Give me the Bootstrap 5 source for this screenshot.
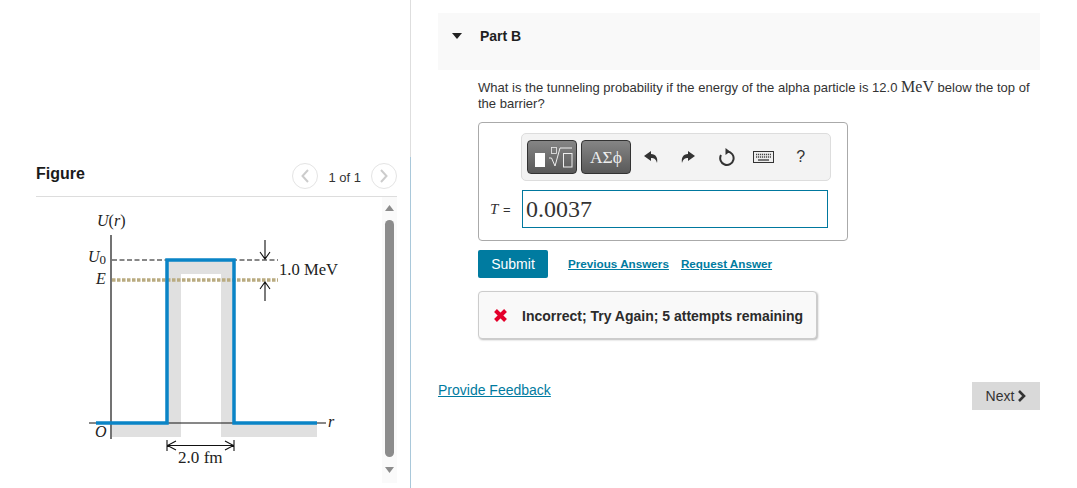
<!DOCTYPE html>
<html lang="en"><head><meta charset="utf-8"><title>Part B</title>
<link rel="stylesheet" href="https://cdn.jsdelivr.net/npm/bootstrap@5.3.0/dist/css/bootstrap.min.css">
<style>
html,body{height:488px;overflow:hidden;background:#fff}
body{font-family:"Liberation Sans",Arial,sans-serif;color:#212121;font-size:12px}
a{color:#007ba0}
.leftpane{width:410px;height:488px;padding:160px 13px 5px 36px;flex:none}
.divider{width:1px;height:488px;flex:none;background:linear-gradient(#dedede 157px,#a9c8da 157px)}
.figtitle{font-size:16px;font-weight:700;color:#1a1a1a;line-height:26px;padding-top:1px}
.fighead{height:37px;border-bottom:1px solid #ddd}
.pager{font-size:13px;color:#333;gap:10px;margin-top:3px}
.pagebtn{width:26px;height:26px;border:1px solid #e4e4e4;border-radius:50%;display:flex;align-items:center;justify-content:center}
.pagecount{padding-top:3px}
.figbody{height:286px}
.figure-canvas{width:346px;height:291px;display:block;flex:none}
.figure-canvas text{font-family:"Liberation Serif",serif;fill:#222;font-size:16px}
.figure-canvas text.txt-mev{font-size:16.600px}
.figure-canvas text.txt-fm{font-size:17.100px}
.scrolltrack{width:15px;background:#fafafa;height:286px}
.rightpane{padding:13px 37px 0 27px;flex:1;min-width:0}
.partbar{height:57px;background:#f9f9f9;padding:13px 0 0 14px;gap:18px;font-size:14px;font-weight:700;color:#1f1f1f;line-height:19px}
.parttitle{padding-top:1px}
.caret{width:0;height:0;border-left:5.500px solid transparent;border-right:5.500px solid transparent;border-top:6px solid #222;margin-top:7px}
.qbody{padding:10px 4px 0 40px}
.qtext{font-size:13.040px;line-height:16px;color:#333;margin:0 0 10px}
.qtext span{font-family:"Liberation Serif",serif;font-size:16px;line-height:14px}
.answerbox{width:370px;height:119px;border:1px solid #aaa;border-radius:4px;padding:10px 0 0 11px}
.mathbar{width:310px;height:48px;margin-left:31px;background:#f3f3f3;border:1px solid #ddd;border-radius:5px;padding:6px 0 0 5px}
.mathkey{width:50px;height:34px;border:1px solid #333;border-radius:4px;background:linear-gradient(#858585,#595959);color:#eee;font-family:"Liberation Serif",serif;font-size:17.500px;margin-right:4px;white-space:nowrap}
.tools{margin-left:-3px;color:#333}
.toolslot{width:37.500px;height:34px;display:flex;align-items:center;justify-content:center;font-size:16px}
.eqrow{margin-top:9px}
.eqlabel{width:32px;font-size:13px;color:#333;white-space:nowrap}
.eqlabel i{font-family:"Liberation Serif",serif;font-size:15px;margin-right:1px}
.eqinput{width:306px;height:38px;border:1px solid #00789e;font-family:"Liberation Serif",serif;font-size:24px;color:#333;padding-left:3px;line-height:36px}
.actionrow{margin-top:9px;gap:20px}
.submitbtn{width:70px;height:28px;background:#007ba0;color:#fff;font-size:14px;border-radius:2px;padding:0;border:0}
.submitbtn:hover{background:#007ba0;color:#fff}
.linkgap{gap:12px;font-size:11.700px;font-weight:700;margin-top:-1px}
.feedbackbox{width:339px;height:48px;margin-top:13px;background:#f9f9f9;border:1px solid #ccc;border-radius:4px;box-shadow:1px 1px 2px #bbb;padding-left:14px;gap:14px;font-size:14px;font-weight:700;color:#2b2b2b}
.feedmsg{padding-top:2px}
.footrow{margin-top:44px;font-size:14px}
.nextbtn{width:68px;height:28px;background:#d9d9d9;color:#333;font-size:14px;padding:0;border:0;border-radius:0;gap:3px;margin-top:-1px}
.nextbtn:hover{background:#d9d9d9;color:#333}
.feedlink{line-height:16px;margin-top:-1px}
</style></head>
<body>
<div class="d-flex">
  <div class="leftpane">
    <div class="fighead d-flex justify-content-between align-items-start">
      <div class="figtitle">Figure</div>
      <div class="pager d-flex align-items-center">
        <span class="pagebtn"><svg width="8" height="14" viewBox="0 0 8 14"><path d="M7 1 1.500 7 7 13" fill="none" stroke="#ccc" stroke-width="2"/></svg></span>
        <span class="pagecount">1 of 1</span>
        <span class="pagebtn"><svg width="8" height="14" viewBox="0 0 8 14"><path d="M1 1 6.500 7 1 13" fill="none" stroke="#ccc" stroke-width="2"/></svg></span>
      </div>
    </div>
    <div class="figbody d-flex">
      <svg class="figure-canvas" viewBox="36 197 346 291" aria-label="Potential energy barrier">
        <g fill="#e0e0e0">
          <rect x="112" y="423" width="69" height="14"/>
          <rect x="166" y="260" width="15" height="177"/>
          <rect x="166" y="260" width="68" height="14"/>
          <rect x="221" y="260" width="13" height="177"/>
          <rect x="221" y="423" width="96" height="14"/>
        </g>
        <path d="M112 260H278" stroke="#111" stroke-width="1" stroke-dasharray="5 2.500" fill="none"/>
        <path d="M112 280H278" stroke="#b9ab80" stroke-width="3.500" stroke-dasharray="3.500 1.500" fill="none"/>
        <path d="M89 423H326" stroke="#111" stroke-width="1"/>
        <path d="M111 235V439" stroke="#444" stroke-width="1.500"/>
        <path d="M96 423H167V260H234V423H317" fill="none" stroke="#0a84c6" stroke-width="3.500"/>
        <g fill="none" stroke="#111" stroke-width="1.100">
          <path d="M265 240V259M260 252 265 259 270 252"/>
          <path d="M265 301V282M260 289 265 282 270 289"/>
          <path d="M167 440V451M234 440V451M167 445.500H234M176 441 167.500 445.500 176 450M225 441 233.500 445.500 225 450"/>
        </g>
        <text x="97" y="226"><tspan font-style="italic">U</tspan>(<tspan font-style="italic">r</tspan>)</text>
        <text x="88" y="262"><tspan font-style="italic">U</tspan><tspan font-size="13" dy="2">0</tspan></text>
        <text x="96" y="284" font-style="italic">E</text>
        <text class="txt-mev" x="279" y="275">1.0 MeV</text>
        <text x="328" y="427" font-style="italic">r</text>
        <text x="95" y="437" font-style="italic">O</text>
        <text class="txt-fm" x="178" y="463">2.0 fm</text>
      </svg>
      <div class="scrolltrack">
        <svg width="15" height="286" viewBox="0 0 15 286">
          <path d="M3 14 7.500 8 12 14Z" fill="#8c8c8c"/>
          <rect x="3" y="23" width="9" height="237" rx="4.500" fill="#8c8c8c"/>
          <path d="M3 270 7.500 276 12 270Z" fill="#8c8c8c"/>
        </svg>
      </div>
    </div>
  </div>
  <div class="divider"></div>
  <div class="rightpane">
    <div class="partbar d-flex align-items-start">
      <span class="caret"></span><span class="parttitle">Part B</span>
    </div>
    <div class="qbody">
      <p class="qtext">What is the tunneling probability if the energy of the alpha particle is 12.0 <span>MeV</span> below the top of the barrier?</p>
      <div class="answerbox">
        <div class="mathbar d-flex">
          <button type="button" class="mathkey p-0 d-flex align-items-center justify-content-center" aria-label="Templates">
            <svg width="44" height="30" viewBox="0 0 44 30"><rect x="5" y="11" width="10" height="14" fill="#fff"/><rect x="21.500" y="5.500" width="5" height="6" fill="none" stroke="#eee" stroke-width=".8"/><path d="M19 16h2.500l3.500 8 5-18H42" fill="none" stroke="#eee" stroke-width="1"/><rect x="33.500" y="11.500" width="8.500" height="13.500" fill="none" stroke="#eee" stroke-width="1"/></svg>
          </button>
          <button type="button" class="mathkey p-0">ΑΣϕ</button>
          <div class="tools d-flex">
            <span class="toolslot"><svg width="16" height="14" viewBox="0 0 16 14"><path d="M8 1 1 6l7 5V8c3 0 5 1 6 5 1-5-1-9-6-9Z" fill="#333"/></svg></span>
            <span class="toolslot"><svg width="16" height="14" viewBox="0 0 16 14"><path d="M8 1l7 5-7 5V8c-3 0-5 1-6 5-1-5 1-9 6-9Z" fill="#333"/></svg></span>
            <span class="toolslot"><svg width="18" height="20" viewBox="0 0 18 20"><path d="M10.500 4.500A6.700 6.700 0 1 1 4 8" fill="none" stroke="#333" stroke-width="2"/><path d="M8.500 1v7l4.500-3.500Z" fill="#333"/></svg></span>
            <span class="toolslot"><svg width="21" height="12" viewBox="0 0 21 12"><rect x=".5" y=".5" width="20" height="11" fill="#eee" stroke="#333"/><path d="M3 3.500h15M3 6h15" stroke="#444" stroke-width="1.400" stroke-dasharray="1.200 .8"/><path d="M5 9h11" stroke="#444" stroke-width="1.400"/></svg></span>
            <span class="toolslot">?</span>
          </div>
        </div>
        <div class="eqrow d-flex align-items-center">
          <div class="eqlabel"><i>T</i> =</div>
          <div class="eqinput">0.0037</div>
        </div>
      </div>
      <div class="actionrow d-flex align-items-center">
        <button type="button" class="btn submitbtn">Submit</button>
        <div class="linkgap d-flex"><a href="#">Previous Answers</a><a href="#">Request Answer</a></div>
      </div>
      <div class="feedbackbox d-flex align-items-center">
        <svg width="15" height="15" viewBox="0 0 15 15"><path d="M2.500 2.500 12.500 12.500M12.500 2.500 2.500 12.500" stroke="#e4002b" stroke-width="4"/></svg>
        <span class="feedmsg">Incorrect; Try Again; 5 attempts remaining</span>
      </div>
    </div>
    <div class="footrow d-flex justify-content-between align-items-start">
      <a class="feedlink" href="#">Provide Feedback</a>
      <button type="button" class="btn nextbtn d-flex align-items-center justify-content-center">Next <svg width="9" height="12" viewBox="0 0 9 12"><path d="M2 1 7 6 2 11" fill="none" stroke="#333" stroke-width="2.600"/></svg></button>
    </div>
  </div>
</div>
<script src="https://cdn.jsdelivr.net/npm/bootstrap@5.3.0/dist/js/bootstrap.bundle.min.js"></script>
</body></html>
